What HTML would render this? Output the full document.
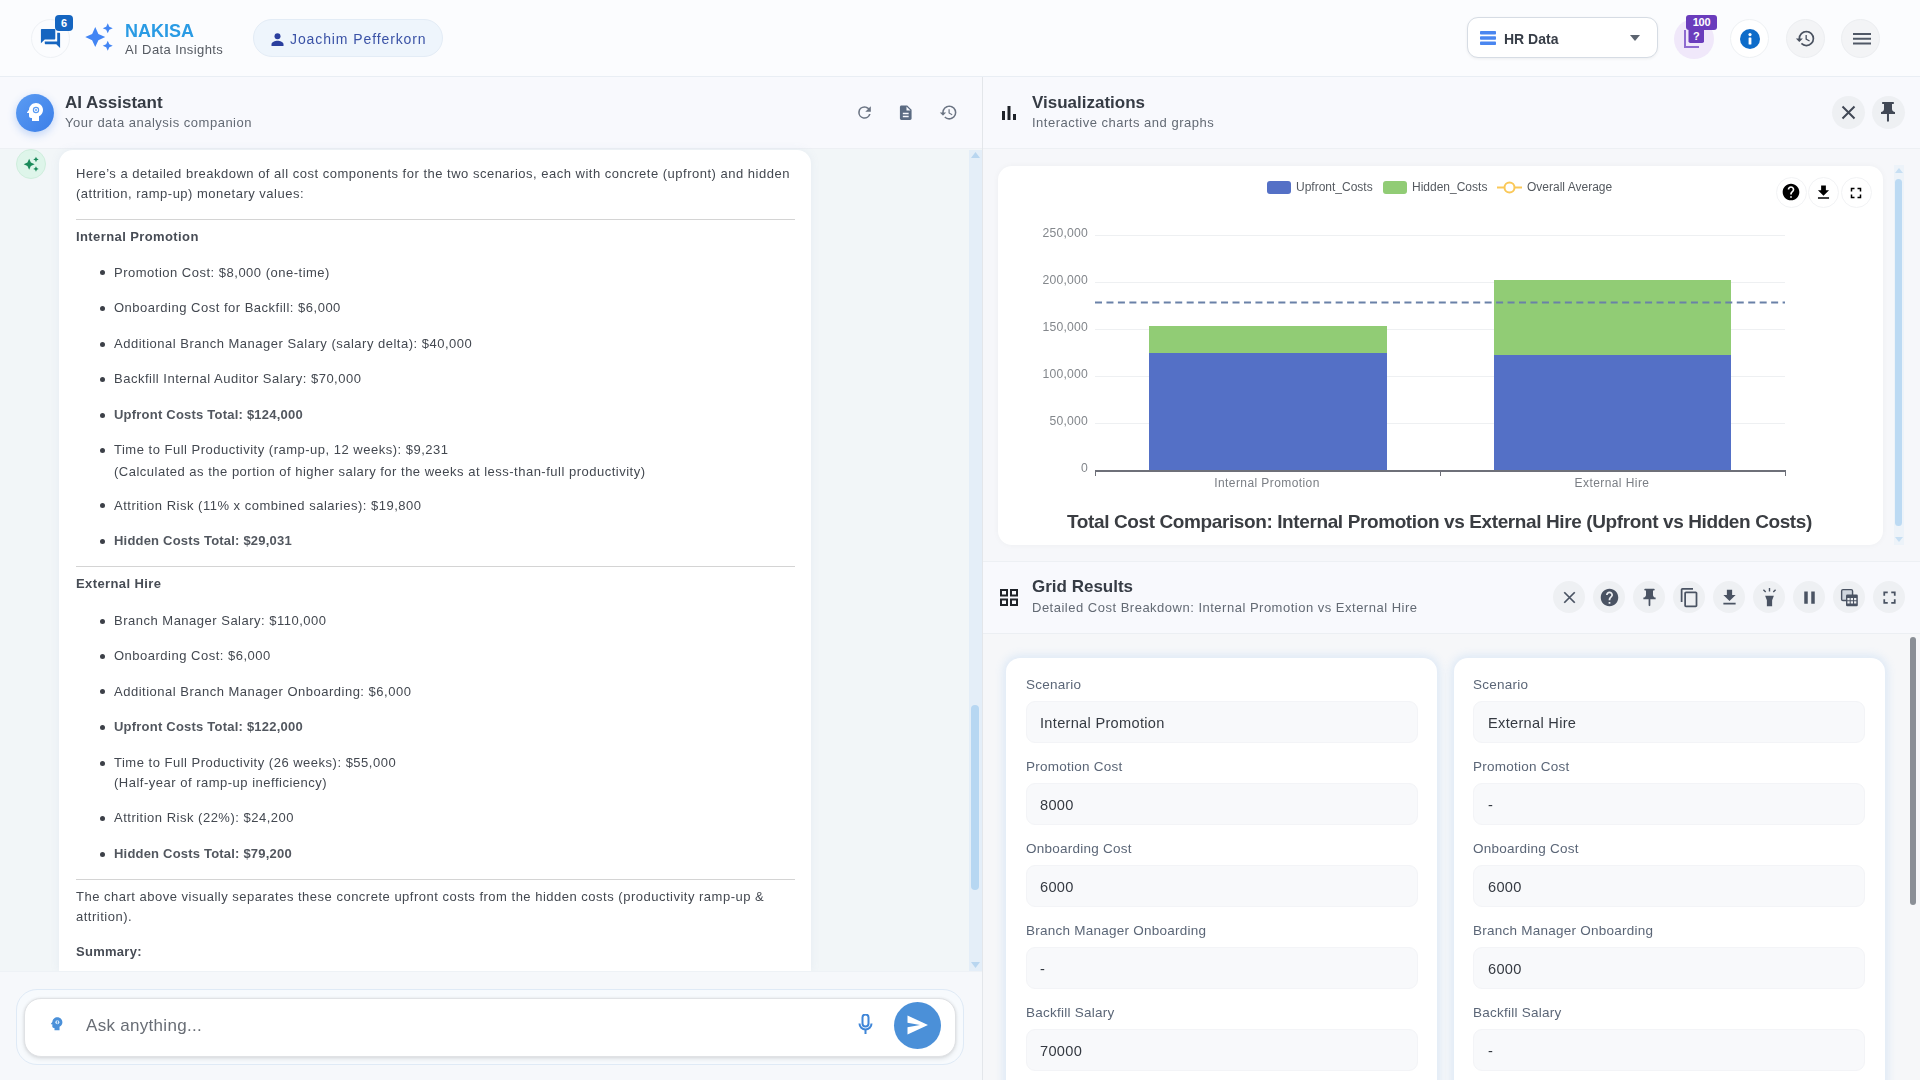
<!DOCTYPE html>
<html><head><meta charset="utf-8">
<style>
*{box-sizing:border-box;margin:0;padding:0}
html,body{width:1920px;height:1080px;overflow:hidden}
body{font-family:"Liberation Sans",sans-serif;background:#f7f9fc;position:relative;color:#3b4048}
.a{position:absolute}
.t{position:absolute;white-space:nowrap;line-height:1;will-change:transform}
.circ{position:absolute;border-radius:50%}
svg{display:block}
</style></head><body>

<!-- TOP HEADER -->
<div class="a" style="left:0;top:0;width:1920px;height:77px;background:#fbfcfe;border-bottom:1px solid #e9eef4"></div>
<div class="circ" style="left:31px;top:19px;width:39px;height:39px;background:#fbfcfe;border:1px solid #eef1f5"></div>
<svg class="a" style="left:39px;top:27px" width="23" height="23" viewBox="0 0 24 24"><path fill="#1565c0" d="M21 6h-2v9H6v2c0 .55.45 1 1 1h11l4 4V7c0-.55-.45-1-1-1zm-4 6V3c0-.55-.45-1-1-1H3c-.55 0-1 .45-1 1v14l4-4h10c.55 0 1-.45 1-1z"/></svg>
<div class="a" style="left:55px;top:15px;width:18px;height:16px;background:#1565c0;border-radius:4px;color:#fff;font-size:11px;font-weight:bold;text-align:center;line-height:16px">6</div>
<svg class="a" style="left:84px;top:22px" width="30" height="30" viewBox="0 0 24 24"><path fill="#4285f4" d="M19 9l1.25-2.75L23 5l-2.75-1.25L19 1l-1.25 2.75L15 5l2.75 1.25L19 9zm-7.5.5L9 4 6.5 9.5 1 12l5.5 2.5L9 20l2.5-5.5L17 12l-5.5-2.5zM19 15l-1.25 2.75L15 19l2.75 1.25L19 23l1.25-2.75L23 19l-2.75-1.25L19 15z"/></svg>
<div class="t" style="left:125px;top:21.5px;font-size:18px;font-weight:bold;color:#2a9be4">NAKISA</div>
<div class="t" style="left:125px;top:43px;font-size:13px;color:#555a62;letter-spacing:0.4px">AI Data Insights</div>

<div class="a" style="left:253px;top:19px;width:190px;height:38px;border-radius:19px;background:#eef5fc;border:1px solid #e3ecf6"></div>
<svg class="a" style="left:271px;top:33px" width="13" height="13" viewBox="0 0 13 13"><circle cx="6.5" cy="3.3" r="3" fill="#2b3f9e"/><path d="M0.5 13v-1.6C0.5 9 4 7.8 6.5 7.8S12.5 9 12.5 11.4V13z" fill="#2b3f9e"/></svg>
<div class="t" style="left:290px;top:32px;font-size:14px;color:#3a52a6;letter-spacing:0.9px">Joachim Pefferkorn</div>

<div class="a" style="left:1467px;top:17px;width:191px;height:41px;border-radius:11px;background:#fff;border:1px solid #d6dce4;box-shadow:0 1px 3px rgba(0,0,0,0.06)"></div>
<svg class="a" style="left:1480px;top:31px" width="16" height="14" viewBox="0 0 16 14"><rect x="0" y="0" width="16" height="3.6" rx="0.8" fill="#4a86f0"/><rect x="0" y="5.2" width="16" height="3.6" rx="0.8" fill="#4a86f0"/><rect x="0" y="10.4" width="16" height="3.6" rx="0.8" fill="#4a86f0"/></svg>
<div class="t" style="left:1504px;top:32px;font-size:14px;font-weight:bold;color:#373d47">HR Data</div>
<svg class="a" style="left:1630px;top:35px" width="10" height="6" viewBox="0 0 10 6"><path d="M0 0h10L5 6z" fill="#5c6470"/></svg>

<div class="circ" style="left:1674px;top:19px;width:40px;height:40px;background:#f0e8fa"></div>
<svg class="a" style="left:1683px;top:24px" width="23" height="25" viewBox="0 0 23 25"><path d="M1 6v18h15v-2H3V6z" fill="#8e6bd0"/><rect x="5.5" y="1" width="15.5" height="18" rx="1.8" fill="#6a3cbc"/><text x="13.3" y="15.5" font-size="11" font-weight="bold" fill="#fff" text-anchor="middle" font-family="Liberation Sans">?</text></svg>
<div class="a" style="left:1686px;top:15px;width:31px;height:15px;background:#6a3cbc;border-radius:3px;color:#fff;font-size:11px;font-weight:bold;text-align:center;line-height:15px;letter-spacing:-0.3px">100</div>

<div class="circ" style="left:1730px;top:19px;width:39px;height:39px;background:#fff;border:1px solid #eef1f4"></div>
<svg class="a" style="left:1740px;top:29px" width="20" height="20" viewBox="0 0 20 20"><circle cx="10" cy="10" r="10" fill="#0e6cc9"/><rect x="8.6" y="8.5" width="2.8" height="7" rx="0.6" fill="#fff"/><circle cx="10" cy="5.6" r="1.6" fill="#fff"/></svg>

<div class="circ" style="left:1786px;top:19px;width:39px;height:39px;background:#f3f4f6;border:1px solid #eceef1"></div>
<svg class="a" style="left:1795px;top:28px" width="21" height="21" viewBox="0 0 24 24"><path fill="#4a5260" d="M13 3a9 9 0 0 0-9 9H1l3.89 3.89.07.14L9 12H6c0-3.87 3.13-7 7-7s7 3.13 7 7-3.13 7-7 7c-1.93 0-3.68-.79-4.94-2.06l-1.42 1.42A8.954 8.954 0 0 0 13 21a9 9 0 0 0 0-18zm-1 5v5l4.28 2.54.72-1.21-3.5-2.08V8H12z"/></svg>

<div class="circ" style="left:1841px;top:19px;width:39px;height:39px;background:#f3f4f6;border:1px solid #eceef1"></div>
<svg class="a" style="left:1852.5px;top:32.5px" width="18" height="12" viewBox="0 0 18 12"><rect x="0" y="0" width="18" height="2" fill="#505866"/><rect x="0" y="4.75" width="18" height="2" fill="#505866"/><rect x="0" y="9.5" width="18" height="2" fill="#505866"/></svg>

<!-- LEFT PANEL -->
<div class="a" style="left:0;top:77px;width:982px;height:1003px;background:#f2f6f8"></div>
<div class="a" style="left:0;top:77px;width:982px;height:72px;background:#f8f9fd;border-bottom:1px solid #edf0f4"></div>
<div class="circ" style="left:16px;top:94px;width:38px;height:38px;background:linear-gradient(135deg,#5b9cf3,#3b7ee8);box-shadow:0 3px 8px rgba(59,126,232,0.3)"></div>
<svg class="a" style="left:23px;top:100px" width="24" height="24" viewBox="0 0 24 24"><path fill="#fff" d="M13 3C9.25 3 6.2 5.94 6.02 9.64L4.1 12.2c-.25.33-.01.8.4.8H6v3c0 1.1.9 2 2 2h1v3h7v-4.68c2.36-1.12 4-3.53 4-6.32 0-3.87-3.13-7-7-7z"/><circle cx="13" cy="10" r="2.6" fill="none" stroke="#5b9cf3" stroke-width="1.2"/><circle cx="13" cy="10" r="1" fill="#5b9cf3"/></svg>
<div class="t" style="left:65px;top:94px;font-size:17px;font-weight:bold;color:#363c45">AI Assistant</div>
<div class="t" style="left:65px;top:116px;font-size:13px;color:#636a74;letter-spacing:0.5px">Your data analysis companion</div>

<svg class="a" style="left:854.5px;top:103px" width="19" height="19" viewBox="0 0 24 24"><path fill="#6b7483" d="M17.65 6.35A7.958 7.958 0 0 0 12 4a8 8 0 1 0 7.73 10h-2.08A6 6 0 1 1 12 6c1.66 0 3.14.69 4.22 1.78L13 11h7V4l-2.35 2.35z"/></svg>
<svg class="a" style="left:897.3px;top:104px" width="17.5" height="17.5" viewBox="0 0 24 24"><path fill="#5b6b82" d="M14 2H6c-1.1 0-2 .9-2 2v16c0 1.1.9 2 2 2h12c1.1 0 2-.9 2-2V8l-6-6zm2 16H8v-2h8v2zm0-4H8v-2h8v2zm-3-5V3.5L18.5 9H13z"/></svg>
<svg class="a" style="left:939px;top:102.5px" width="19" height="19" viewBox="0 0 24 24"><path fill="#6b7483" d="M13 3a9 9 0 0 0-9 9H1l3.89 3.89.07.14L9 12H6c0-3.87 3.13-7 7-7s7 3.13 7 7-3.13 7-7 7c-1.93 0-3.68-.79-4.94-2.06l-1.42 1.42A8.954 8.954 0 0 0 13 21a9 9 0 0 0 0-18zm-1 5v5l4.28 2.54.72-1.21-3.5-2.08V8H12z"/></svg>

<!-- chat scroll area -->
<div class="a" style="left:969px;top:150px;width:13px;height:821px;background:#e4eef8"></div>
<svg class="a" style="left:971px;top:152px" width="9" height="6" viewBox="0 0 9 6"><path d="M0 6h9L4.5 0z" fill="#b9d6f0"/></svg>
<svg class="a" style="left:971px;top:962px" width="9" height="6" viewBox="0 0 9 6"><path d="M0 0h9L4.5 6z" fill="#b9d6f0"/></svg>
<div class="a" style="left:971px;top:705px;width:8px;height:185px;border-radius:4px;background:#b7d7f2"></div>

<div class="circ" style="left:16px;top:149px;width:30px;height:30px;background:#def5ea;border:1px solid #cfeedd"></div>
<svg class="a" style="left:22.6px;top:156px" width="16.4" height="16.4" viewBox="0 0 24 24"><path fill="#1a8a5a" d="M19 9l1.25-2.75L23 5l-2.75-1.25L19 1l-1.25 2.75L15 5l2.75 1.25L19 9zm-7.5.5L9 4 6.5 9.5 1 12l5.5 2.5L9 20l2.5-5.5L17 12l-5.5-2.5zM19 15l-1.25 2.75L15 19l2.75 1.25L19 23l1.25-2.75L23 19l-2.75-1.25L19 15z"/></svg>

<div class="a" style="left:59px;top:150px;width:752px;height:821px;background:#fff;border-radius:14px 14px 0 0;box-shadow:0 0 10px rgba(120,150,190,0.10)"></div>

<div class="a" style="left:0;top:0;width:982px;height:971px;overflow:hidden;font-size:13px;color:#434850;letter-spacing:0.5px"><div class="t" style="left:76px;top:166.54px;font-size:13px;">Here&#8217;s a detailed breakdown of all cost components for the two scenarios, each with concrete (upfront) and hidden</div>
<div class="t" style="left:76px;top:186.74px;font-size:13px;">(attrition, ramp-up) monetary values:</div>
<div class="a" style="left:76px;top:218.5px;width:719px;height:1.5px;background:#d4d4d4"></div>
<div class="t" style="left:76px;top:229.54px;font-size:13px;font-weight:bold;color:#474c55;letter-spacing:0.4px;">Internal Promotion</div>
<div class="circ" style="left:100px;top:270.3px;width:5px;height:5px;background:#3c4048"></div>
<div class="t" style="left:114px;top:265.54px;font-size:13px;">Promotion Cost: $8,000 (one-time)</div>
<div class="circ" style="left:100px;top:306.0px;width:5px;height:5px;background:#3c4048"></div>
<div class="t" style="left:114px;top:301.24px;font-size:13px;">Onboarding Cost for Backfill: $6,000</div>
<div class="circ" style="left:100px;top:341.5px;width:5px;height:5px;background:#3c4048"></div>
<div class="t" style="left:114px;top:336.74px;font-size:13px;">Additional Branch Manager Salary (salary delta): $40,000</div>
<div class="circ" style="left:100px;top:377.2px;width:5px;height:5px;background:#3c4048"></div>
<div class="t" style="left:114px;top:372.44px;font-size:13px;">Backfill Internal Auditor Salary: $70,000</div>
<div class="circ" style="left:100px;top:412.9px;width:5px;height:5px;background:#3c4048"></div>
<div class="t" style="left:114px;top:408.13px;font-size:13px;"><b style='letter-spacing:0.22px;color:#52575f'>Upfront Costs Total: $124,000</b></div>
<div class="circ" style="left:100px;top:448.0px;width:5px;height:5px;background:#3c4048"></div>
<div class="t" style="left:114px;top:443.24px;font-size:13px;">Time to Full Productivity (ramp-up, 12 weeks): $9,231</div>
<div class="t" style="left:114px;top:464.54px;font-size:13px;">(Calculated as the portion of higher salary for the weeks at less-than-full productivity)</div>
<div class="circ" style="left:100px;top:503.3px;width:5px;height:5px;background:#3c4048"></div>
<div class="t" style="left:114px;top:498.54px;font-size:13px;">Attrition Risk (11% x combined salaries): $19,800</div>
<div class="circ" style="left:100px;top:538.8px;width:5px;height:5px;background:#3c4048"></div>
<div class="t" style="left:114px;top:534.03px;font-size:13px;"><b style='letter-spacing:0.2px;color:#52575f'>Hidden Costs Total: $29,031</b></div>
<div class="a" style="left:76px;top:565.5px;width:719px;height:1.5px;background:#d4d4d4"></div>
<div class="t" style="left:76px;top:576.74px;font-size:13px;font-weight:bold;color:#474c55;letter-spacing:0.4px;">External Hire</div>
<div class="circ" style="left:100px;top:618.8px;width:5px;height:5px;background:#3c4048"></div>
<div class="t" style="left:114px;top:614.03px;font-size:13px;">Branch Manager Salary: $110,000</div>
<div class="circ" style="left:100px;top:654.0px;width:5px;height:5px;background:#3c4048"></div>
<div class="t" style="left:114px;top:649.24px;font-size:13px;">Onboarding Cost: $6,000</div>
<div class="circ" style="left:100px;top:689.3px;width:5px;height:5px;background:#3c4048"></div>
<div class="t" style="left:114px;top:684.53px;font-size:13px;">Additional Branch Manager Onboarding: $6,000</div>
<div class="circ" style="left:100px;top:725.0px;width:5px;height:5px;background:#3c4048"></div>
<div class="t" style="left:114px;top:720.24px;font-size:13px;"><b style='letter-spacing:0.22px;color:#52575f'>Upfront Costs Total: $122,000</b></div>
<div class="circ" style="left:100px;top:760.5px;width:5px;height:5px;background:#3c4048"></div>
<div class="t" style="left:114px;top:755.74px;font-size:13px;">Time to Full Productivity (26 weeks): $55,000</div>
<div class="t" style="left:114px;top:776.03px;font-size:13px;">(Half-year of ramp-up inefficiency)</div>
<div class="circ" style="left:100px;top:816.0px;width:5px;height:5px;background:#3c4048"></div>
<div class="t" style="left:114px;top:811.24px;font-size:13px;">Attrition Risk (22%): $24,200</div>
<div class="circ" style="left:100px;top:851.8px;width:5px;height:5px;background:#3c4048"></div>
<div class="t" style="left:114px;top:847.03px;font-size:13px;"><b style='letter-spacing:0.2px;color:#52575f'>Hidden Costs Total: $79,200</b></div>
<div class="a" style="left:76px;top:878.5px;width:719px;height:1.5px;background:#d4d4d4"></div>
<div class="t" style="left:76px;top:890.24px;font-size:13px;">The chart above visually separates these concrete upfront costs from the hidden costs (productivity ramp-up &amp;</div>
<div class="t" style="left:76px;top:910.24px;font-size:13px;">attrition).</div>
<div class="t" style="left:76px;top:945.44px;font-size:13px;font-weight:bold;color:#474c55;letter-spacing:0.27px;">Summary:</div></div>

<!-- input area -->
<div class="a" style="left:0;top:971px;width:982px;height:109px;background:#f6f8fb;border-top:1px solid #eef2f6"></div>
<div class="a" style="left:16px;top:989px;width:948px;height:76px;border-radius:21px;background:#f7fafd;border:1px solid #dfeaf6"></div>
<div class="a" style="left:24px;top:998px;width:932px;height:59px;border-radius:17px;background:#fff;border:1px solid #e0e2e5;box-shadow:0 2px 4px rgba(0,0,0,0.10),0 0 3px rgba(0,0,0,0.07)"></div>
<svg class="a" style="left:47.5px;top:1015.4px" width="17.3" height="17.3" viewBox="0 0 24 24"><path fill="#4a90d9" d="M13 3C9.25 3 6.2 5.94 6.02 9.64L4.1 12.2c-.25.33-.01.8.4.8H6v3c0 1.1.9 2 2 2h1v3h7v-4.68c2.36-1.12 4-3.53 4-6.32 0-3.87-3.13-7-7-7z"/><circle cx="13" cy="10" r="2.8" fill="#cfe6fb"/><rect x="12.4" y="8" width="1.2" height="4" fill="#4a90d9"/></svg>
<div class="t" style="left:86px;top:1017px;font-size:17px;color:#686d75;letter-spacing:0.3px">Ask anything...</div>
<svg class="a" style="left:858px;top:1014px" width="15" height="21" viewBox="0 0 15 21"><rect x="4.5" y="0.5" width="6" height="12" rx="3" fill="none" stroke="#3f86d8" stroke-width="2"/><path d="M1.5 9.5c0 3.5 2.7 6 6 6s6-2.5 6-6" fill="none" stroke="#3f86d8" stroke-width="2"/><rect x="6.5" y="15" width="2" height="5" fill="#3f86d8"/></svg>
<div class="circ" style="left:894px;top:1002px;width:47px;height:47px;background:#4b90d8"></div>
<svg class="a" style="left:906px;top:1014px" width="24" height="22" viewBox="0 0 24 22"><path d="M1.5 1.5 L22 11 L1.5 20.5 L1.5 13.2 L14 11 L1.5 8.8Z" fill="#fff"/></svg>

<!-- RIGHT PANEL -->
<div class="a" style="left:982px;top:77px;width:1px;height:1003px;background:#e3e6ea"></div>
<div class="a" style="left:983px;top:77px;width:937px;height:1003px;background:#f6f7fa"></div>
<div class="a" style="left:983px;top:77px;width:937px;height:72px;background:#f8f9fd;border-bottom:1px solid #edf0f4"></div>
<svg class="a" style="left:1002px;top:106px" width="14" height="14" viewBox="0 0 14 14"><rect x="0" y="5" width="3" height="9" fill="#1f2329"/><rect x="5.5" y="0" width="3" height="14" fill="#1f2329"/><rect x="11" y="8" width="3" height="6" fill="#1f2329"/></svg>
<div class="t" style="left:1032px;top:94px;font-size:17px;font-weight:bold;color:#363c45">Visualizations</div>
<div class="t" style="left:1032px;top:116px;font-size:13px;color:#636a74;letter-spacing:0.5px">Interactive charts and graphs</div>
<div class="circ" style="left:1832px;top:96px;width:33px;height:33px;background:#eef0f3"></div>
<svg class="a" style="left:1841px;top:105px" width="15" height="15" viewBox="0 0 15 15"><path d="M1.5 1.5 13.5 13.5M13.5 1.5 1.5 13.5" stroke="#414855" stroke-width="2"/></svg>
<div class="circ" style="left:1872px;top:96px;width:33px;height:33px;background:#eef0f3"></div>
<svg class="a" style="left:1876px;top:100px" width="24" height="24" viewBox="0 0 24 24"><path fill="#414855" d="M16 9V4h1c.55 0 1-.45 1-1s-.45-1-1-1H7c-.55 0-1 .45-1 1s.45 1 1 1h1v5c0 1.66-1.34 3-3 3v2h5.97v7l1 1 1-1v-7H19v-2c-1.66 0-3-1.34-3-3z"/></svg>

<!-- chart card -->
<div class="a" style="left:998px;top:166px;width:885px;height:379px;background:#fff;border-radius:14px;box-shadow:0 0 6px rgba(0,0,0,0.04)"></div>
<div class="a" style="left:1894px;top:165px;width:10px;height:380px;background:#edf3f9"></div>
<div class="a" style="left:1895px;top:179px;width:7px;height:347px;border-radius:4px;background:#bcdaf3"></div>
<svg class="a" style="left:1895px;top:168px" width="8" height="5" viewBox="0 0 8 5"><path d="M0 5h8L4 0z" fill="#c7dff3"/></svg>
<svg class="a" style="left:1895px;top:537px" width="8" height="5" viewBox="0 0 8 5"><path d="M0 0h8L4 5z" fill="#c7dff3"/></svg>

<div class="t" style="left:888px;width:200px;text-align:right;top:462.3px;font-size:12.2px;color:#83878c;letter-spacing:0.2px">0</div>
<div class="a" style="left:1095px;top:422.9px;width:690px;height:1px;background:#eef0f2"></div>
<div class="t" style="left:888px;width:200px;text-align:right;top:415.2px;font-size:12.2px;color:#83878c;letter-spacing:0.2px">50,000</div>
<div class="a" style="left:1095px;top:375.8px;width:690px;height:1px;background:#eef0f2"></div>
<div class="t" style="left:888px;width:200px;text-align:right;top:368.1px;font-size:12.2px;color:#83878c;letter-spacing:0.2px">100,000</div>
<div class="a" style="left:1095px;top:328.7px;width:690px;height:1px;background:#eef0f2"></div>
<div class="t" style="left:888px;width:200px;text-align:right;top:321.0px;font-size:12.2px;color:#83878c;letter-spacing:0.2px">150,000</div>
<div class="a" style="left:1095px;top:281.6px;width:690px;height:1px;background:#eef0f2"></div>
<div class="t" style="left:888px;width:200px;text-align:right;top:273.9px;font-size:12.2px;color:#83878c;letter-spacing:0.2px">200,000</div>
<div class="a" style="left:1095px;top:234.5px;width:690px;height:1px;background:#eef0f2"></div>
<div class="t" style="left:888px;width:200px;text-align:right;top:226.8px;font-size:12.2px;color:#83878c;letter-spacing:0.2px">250,000</div>
<div class="a" style="left:1149px;top:353px;width:238px;height:117.5px;background:#5470c6"></div><div class="a" style="left:1149px;top:325.5px;width:238px;height:27.5px;background:#91cc75"></div>
<div class="a" style="left:1494px;top:354.5px;width:237px;height:116px;background:#5470c6"></div><div class="a" style="left:1494px;top:280px;width:237px;height:74.5px;background:#91cc75"></div>
<div class="a" style="left:1095px;top:470.0px;width:691px;height:1.5px;background:#6e7079"></div>
<div class="a" style="left:1095px;top:470.5px;width:1px;height:5px;background:#6e7079"></div>
<div class="a" style="left:1440px;top:470.5px;width:1px;height:5px;background:#6e7079"></div>
<div class="a" style="left:1785px;top:470.5px;width:1px;height:5px;background:#6e7079"></div>
<div class="t" style="left:1117px;width:300px;text-align:center;top:476.8px;font-size:12px;color:#7a7e84;letter-spacing:0.42px">Internal Promotion</div>
<div class="t" style="left:1462px;width:300px;text-align:center;top:476.8px;font-size:12px;color:#7a7e84;letter-spacing:0.42px">External Hire</div>
<svg class="a" style="left:1095px;top:300px" width="690" height="5"><line x1="0" y1="2.5" x2="690" y2="2.5" stroke="#6a81a8" stroke-width="2" stroke-dasharray="7,4.46"/></svg>
<div class="a" style="left:1267px;top:181px;width:24px;height:13px;border-radius:3px;background:#5470c6"></div>
<div class="t" style="left:1296px;top:181px;font-size:12px;color:#555a60">Upfront_Costs</div>
<div class="a" style="left:1383px;top:181px;width:24px;height:13px;border-radius:3px;background:#91cc75"></div>
<div class="t" style="left:1412px;top:181px;font-size:12px;color:#555a60">Hidden_Costs</div>
<svg class="a" style="left:1497px;top:180px" width="25" height="15"><line x1="0" y1="7.5" x2="25" y2="7.5" stroke="#fac858" stroke-width="2"/><circle cx="12.5" cy="7.5" r="5" fill="#fff" stroke="#fac858" stroke-width="2"/></svg>
<div class="t" style="left:1527px;top:181px;font-size:12px;color:#555a60">Overall Average</div>
<div class="t" style="left:1067px;top:512.80px;font-size:19px;font-weight:bold;color:#3a3d42;letter-spacing:-0.39px;margin-top:-0.5px">Total Cost Comparison: Internal Promotion vs External Hire (Upfront vs Hidden Costs)</div>
<div class="circ" style="left:1775.5px;top:177px;width:31px;height:31px;background:#fff;border:1px solid #f2f3f5"></div>
<div class="circ" style="left:1808.0px;top:177px;width:31px;height:31px;background:#fff;border:1px solid #f2f3f5"></div>
<div class="circ" style="left:1840.5px;top:177px;width:31px;height:31px;background:#fff;border:1px solid #f2f3f5"></div>
<svg class="a" style="left:1781px;top:182px" width="20" height="20" viewBox="0 0 24 24"><path fill="#000" d="M12 2C6.48 2 2 6.48 2 12s4.48 10 10 10 10-4.48 10-10S17.52 2 12 2zm1 17h-2v-2h2v2zm2.07-7.75-.9.92C13.45 12.9 13 13.5 13 15h-2v-.5c0-1.1.45-2.1 1.17-2.83l1.24-1.26c.37-.36.59-.86.59-1.41 0-1.1-.9-2-2-2s-2 .9-2 2H8c0-2.21 1.79-4 4-4s4 1.79 4 4c0 .88-.36 1.68-.93 2.25z"/></svg>
<svg class="a" style="left:1814px;top:183px" width="19" height="19" viewBox="0 0 24 24"><path fill="#000" d="M19 9h-4V3H9v6H5l7 7 7-7zM5 18v2h14v-2H5z"/></svg>
<svg class="a" style="left:1847px;top:184px" width="18" height="18" viewBox="0 0 24 24"><path fill="#000" d="M7 14H5v5h5v-2H7v-3zm-2-4h2V7h3V5H5v5zm12 7h-3v2h5v-5h-2v3zM14 5v2h3v3h2V5h-5z"/></svg>

<!-- grid results header -->
<div class="a" style="left:983px;top:561px;width:937px;height:73px;background:#f8f9fd;border-top:1px solid #edf0f4;border-bottom:1px solid #eceff3"></div>
<svg class="a" style="left:1000px;top:589px" width="18" height="17" viewBox="0 0 18 17"><rect x="1" y="1" width="6" height="5.5" fill="none" stroke="#1f2329" stroke-width="2"/><rect x="11" y="1" width="6" height="5.5" fill="none" stroke="#1f2329" stroke-width="2"/><rect x="1" y="10.5" width="6" height="5.5" fill="none" stroke="#1f2329" stroke-width="2"/><rect x="11" y="10.5" width="6" height="5.5" fill="none" stroke="#1f2329" stroke-width="2"/></svg>
<div class="t" style="left:1032px;top:578px;font-size:17px;font-weight:bold;color:#363c45">Grid Results</div>
<div class="t" style="left:1032px;top:601px;font-size:13px;color:#636a74;letter-spacing:0.5px">Detailed Cost Breakdown: Internal Promotion vs External Hire</div>
<div class="circ" style="left:1553px;top:581px;width:32px;height:32px;background:#eef0f3"></div>
<svg class="a" style="left:1558.5px;top:586.5px" width="21" height="21" viewBox="0 0 24 24"><path d="M6 6 18 18M18 6 6 18" stroke="#4a5363" stroke-width="2" fill="none"/></svg>
<div class="circ" style="left:1593px;top:581px;width:32px;height:32px;background:#eef0f3"></div>
<svg class="a" style="left:1598.5px;top:586.5px" width="21" height="21" viewBox="0 0 24 24"><path fill="#4a5363" d="M12 2C6.48 2 2 6.48 2 12s4.48 10 10 10 10-4.48 10-10S17.52 2 12 2zm1 17h-2v-2h2v2zm2.07-7.75-.9.92C13.45 12.9 13 13.5 13 15h-2v-.5c0-1.1.45-2.1 1.17-2.83l1.24-1.26c.37-.36.59-.86.59-1.41 0-1.1-.9-2-2-2s-2 .9-2 2H8c0-2.21 1.79-4 4-4s4 1.79 4 4c0 .88-.36 1.68-.93 2.25z"/></svg>
<div class="circ" style="left:1633px;top:581px;width:32px;height:32px;background:#eef0f3"></div>
<svg class="a" style="left:1638.5px;top:586.5px" width="21" height="21" viewBox="0 0 24 24"><path fill="#4a5363" d="M16 9V4h1c.55 0 1-.45 1-1s-.45-1-1-1H7c-.55 0-1 .45-1 1s.45 1 1 1h1v5c0 1.66-1.34 3-3 3v2h5.97v7l1 1 1-1v-7H19v-2c-1.66 0-3-1.34-3-3z"/></svg>
<div class="circ" style="left:1673px;top:581px;width:32px;height:32px;background:#eef0f3"></div>
<svg class="a" style="left:1678.5px;top:586.5px" width="21" height="21" viewBox="0 0 24 24"><path fill="#4a5363" d="M16 1H4c-1.1 0-2 .9-2 2v14h2V3h12V1zm3 4H8c-1.1 0-2 .9-2 2v14c0 1.1.9 2 2 2h11c1.1 0 2-.9 2-2V7c0-1.1-.9-2-2-2zm0 16H8V7h11v14z"/></svg>
<div class="circ" style="left:1713px;top:581px;width:32px;height:32px;background:#eef0f3"></div>
<svg class="a" style="left:1718.5px;top:586.5px" width="21" height="21" viewBox="0 0 24 24"><path fill="#4a5363" d="M19 9h-4V3H9v6H5l7 7 7-7zM5 18v2h14v-2H5z"/></svg>
<div class="circ" style="left:1753px;top:581px;width:32px;height:32px;background:#eef0f3"></div>
<svg class="a" style="left:1758.5px;top:586.5px" width="21" height="21" viewBox="0 0 24 24"><path fill="#4a5363" d="M7 10h10l-2 5v7H9v-7zM11.2 1h1.6v4h-1.6zM4.5 3.6l1.1-1.1 2.6 2.6-1.1 1.1zM18.4 2.5l1.1 1.1-2.6 2.6-1.1-1.1z"/></svg>
<div class="circ" style="left:1793px;top:581px;width:32px;height:32px;background:#eef0f3"></div>
<svg class="a" style="left:1798.5px;top:586.5px" width="21" height="21" viewBox="0 0 24 24"><path fill="#4a5363" d="M6 5h4v14H6zm8 0h4v14h-4z"/></svg>
<div class="circ" style="left:1833px;top:581px;width:32px;height:32px;background:#eef0f3"></div>
<svg class="a" style="left:1838.5px;top:586.5px" width="21" height="21" viewBox="0 0 24 24"><rect x="3" y="3" width="12.5" height="12.5" rx="1.5" fill="#cfd5dd" stroke="#4a5363" stroke-width="1.6"/><rect x="8" y="8.5" width="13.5" height="13.5" rx="1.5" fill="#4a5363"/><path fill="#eef0f3" d="M9.6 12.6h2.6v2.4H9.6zm3.8 0h2.6v2.4h-2.6zm3.8 0h2.6v2.4h-2.6zM9.6 16.4h2.6v2.4H9.6zm3.8 0h2.6v2.4h-2.6zm3.8 0h2.6v2.4h-2.6z"/></svg>
<div class="circ" style="left:1873px;top:581px;width:32px;height:32px;background:#eef0f3"></div>
<svg class="a" style="left:1878.5px;top:586.5px" width="21" height="21" viewBox="0 0 24 24"><path fill="#4a5363" d="M7 14H5v5h5v-2H7v-3zm-2-4h2V7h3V5H5v5zm12 7h-3v2h5v-5h-2v3zM14 5v2h3v3h2V5h-5z"/></svg>

<div class="a" style="left:983px;top:634px;width:937px;height:446px;background:#f6f7f9"></div>
<div class="a" style="left:1006px;top:658px;width:431px;height:460px;background:#fff;border-radius:14px;box-shadow:0 0 8px 3px rgba(100,165,235,0.16)"></div>
<div class="t" style="left:1025.5px;top:677.78px;font-size:13.5px;color:#5b6677;letter-spacing:0.25px;">Scenario</div>
<div class="a" style="left:1025.5px;top:701px;width:392px;height:42px;border-radius:9px;background:#f8f9fb;border:1px solid #f3f4f7"></div>
<div class="t" style="left:1040px;top:714.29px;font-size:14.6px;color:#353a42;letter-spacing:0.3px;margin-top:2px">Internal Promotion</div>
<div class="t" style="left:1025.5px;top:759.78px;font-size:13.5px;color:#5b6677;letter-spacing:0.25px;">Promotion Cost</div>
<div class="a" style="left:1025.5px;top:783px;width:392px;height:42px;border-radius:9px;background:#f8f9fb;border:1px solid #f3f4f7"></div>
<div class="t" style="left:1040px;top:796.29px;font-size:14.6px;color:#353a42;letter-spacing:0.3px;margin-top:2px">8000</div>
<div class="t" style="left:1025.5px;top:841.78px;font-size:13.5px;color:#5b6677;letter-spacing:0.25px;">Onboarding Cost</div>
<div class="a" style="left:1025.5px;top:865px;width:392px;height:42px;border-radius:9px;background:#f8f9fb;border:1px solid #f3f4f7"></div>
<div class="t" style="left:1040px;top:878.29px;font-size:14.6px;color:#353a42;letter-spacing:0.3px;margin-top:2px">6000</div>
<div class="t" style="left:1025.5px;top:923.78px;font-size:13.5px;color:#5b6677;letter-spacing:0.25px;">Branch Manager Onboarding</div>
<div class="a" style="left:1025.5px;top:947px;width:392px;height:42px;border-radius:9px;background:#f8f9fb;border:1px solid #f3f4f7"></div>
<div class="t" style="left:1040px;top:960.29px;font-size:14.6px;color:#353a42;letter-spacing:0.3px;margin-top:2px">-</div>
<div class="t" style="left:1025.5px;top:1005.78px;font-size:13.5px;color:#5b6677;letter-spacing:0.25px;">Backfill Salary</div>
<div class="a" style="left:1025.5px;top:1029px;width:392px;height:42px;border-radius:9px;background:#f8f9fb;border:1px solid #f3f4f7"></div>
<div class="t" style="left:1040px;top:1042.29px;font-size:14.6px;color:#353a42;letter-spacing:0.3px;margin-top:2px">70000</div>
<div class="a" style="left:1453.5px;top:658px;width:431px;height:460px;background:#fff;border-radius:14px;box-shadow:0 0 8px 3px rgba(100,165,235,0.16)"></div>
<div class="t" style="left:1473.0px;top:677.78px;font-size:13.5px;color:#5b6677;letter-spacing:0.25px;">Scenario</div>
<div class="a" style="left:1473.0px;top:701px;width:392px;height:42px;border-radius:9px;background:#f8f9fb;border:1px solid #f3f4f7"></div>
<div class="t" style="left:1487.5px;top:714.29px;font-size:14.6px;color:#353a42;letter-spacing:0.3px;margin-top:2px">External Hire</div>
<div class="t" style="left:1473.0px;top:759.78px;font-size:13.5px;color:#5b6677;letter-spacing:0.25px;">Promotion Cost</div>
<div class="a" style="left:1473.0px;top:783px;width:392px;height:42px;border-radius:9px;background:#f8f9fb;border:1px solid #f3f4f7"></div>
<div class="t" style="left:1487.5px;top:796.29px;font-size:14.6px;color:#353a42;letter-spacing:0.3px;margin-top:2px">-</div>
<div class="t" style="left:1473.0px;top:841.78px;font-size:13.5px;color:#5b6677;letter-spacing:0.25px;">Onboarding Cost</div>
<div class="a" style="left:1473.0px;top:865px;width:392px;height:42px;border-radius:9px;background:#f8f9fb;border:1px solid #f3f4f7"></div>
<div class="t" style="left:1487.5px;top:878.29px;font-size:14.6px;color:#353a42;letter-spacing:0.3px;margin-top:2px">6000</div>
<div class="t" style="left:1473.0px;top:923.78px;font-size:13.5px;color:#5b6677;letter-spacing:0.25px;">Branch Manager Onboarding</div>
<div class="a" style="left:1473.0px;top:947px;width:392px;height:42px;border-radius:9px;background:#f8f9fb;border:1px solid #f3f4f7"></div>
<div class="t" style="left:1487.5px;top:960.29px;font-size:14.6px;color:#353a42;letter-spacing:0.3px;margin-top:2px">6000</div>
<div class="t" style="left:1473.0px;top:1005.78px;font-size:13.5px;color:#5b6677;letter-spacing:0.25px;">Backfill Salary</div>
<div class="a" style="left:1473.0px;top:1029px;width:392px;height:42px;border-radius:9px;background:#f8f9fb;border:1px solid #f3f4f7"></div>
<div class="t" style="left:1487.5px;top:1042.29px;font-size:14.6px;color:#353a42;letter-spacing:0.3px;margin-top:2px">-</div>
<div class="a" style="left:1910px;top:637px;width:6px;height:268px;border-radius:3px;background:#8a8f96"></div>

</body></html>
